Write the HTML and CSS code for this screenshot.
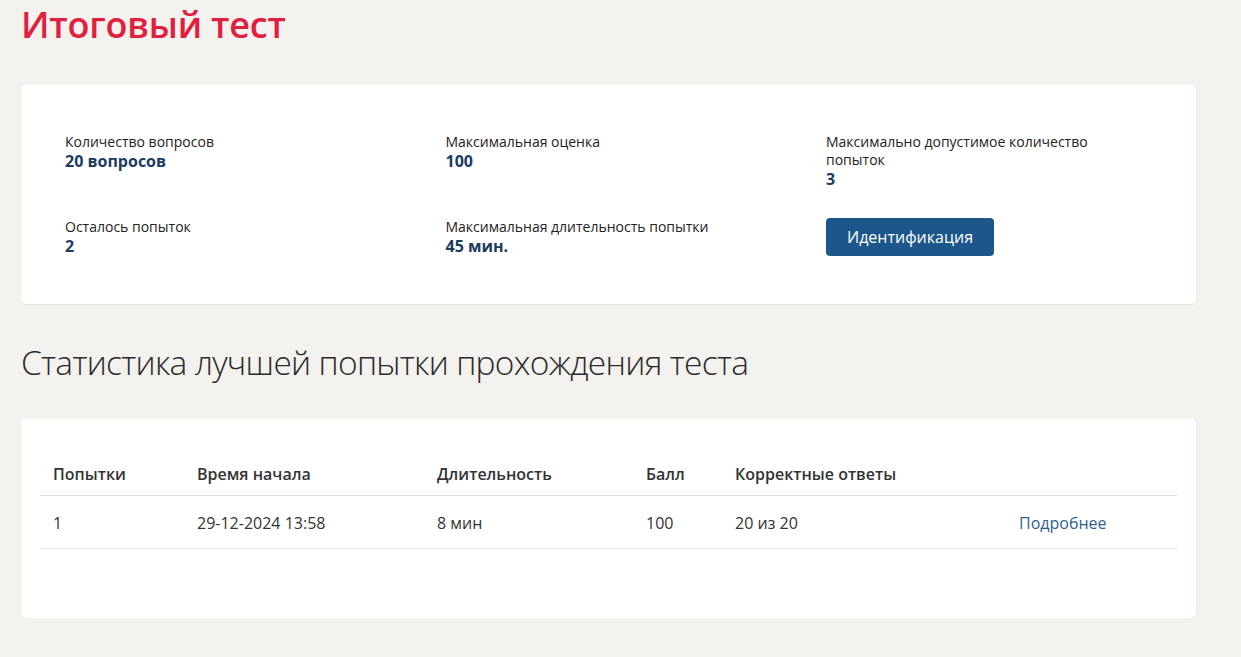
FILE: index.html
```html
<!DOCTYPE html>
<html lang="ru">
<head>
    <meta charset="UTF-8">
    <meta name="viewport" content="width=device-width, initial-scale=1.0">
    <title>Итоговый тест</title>
    <link rel="stylesheet" href="styles.css">
</head>
<body>
    <div class="page">
        <h1 class="page-title">Итоговый тест</h1>

        <div class="card info-card">
            <div class="info-grid">
                <div class="info-item">
                    <div class="info-label">Количество вопросов</div>
                    <div class="info-value">20 вопросов</div>
                </div>
                <div class="info-item">
                    <div class="info-label">Максимальная оценка</div>
                    <div class="info-value">100</div>
                </div>
                <div class="info-item">
                    <div class="info-label">Максимально допустимое количество попыток</div>
                    <div class="info-value">3</div>
                </div>
                <div class="info-item">
                    <div class="info-label">Осталось попыток</div>
                    <div class="info-value">2</div>
                </div>
                <div class="info-item">
                    <div class="info-label">Максимальная длительность попытки</div>
                    <div class="info-value">45 мин.</div>
                </div>
                <div class="info-item">
                    <button class="btn-primary">Идентификация</button>
                </div>
            </div>
        </div>

        <h2 class="section-title">Статистика лучшей попытки прохождения теста</h2>

        <div class="card table-card">
            <table class="stats-table">
                <thead>
                    <tr>
                        <th class="col-try">Попытки</th>
                        <th class="col-start">Время начала</th>
                        <th class="col-dur">Длительность</th>
                        <th class="col-score">Балл</th>
                        <th class="col-correct">Корректные ответы</th>
                        <th class="col-link"></th>
                    </tr>
                </thead>
                <tbody>
                    <tr>
                        <td>1</td>
                        <td>29-12-2024 13:58</td>
                        <td>8 мин</td>
                        <td>100</td>
                        <td>20 из 20</td>
                        <td><a href="#" class="more-link">Подробнее</a></td>
                    </tr>
                </tbody>
            </table>
        </div>
    </div>
</body>
</html>
```

FILE: styles.css
```css
body {
    margin: 0;
    background-color: #f3f2ef;
    font-family: "Open Sans", "Noto Sans", sans-serif;
    color: #222;
}
.page {
    width: 1175px;
    padding: 0 0 0 21px;
}
.page-title {
    margin: 0;
    padding-top: 4px;
    height: 81px;
    font-size: 36px;
    font-weight: 600;
    line-height: 42px;
    color: #e0203e;
    letter-spacing: -0.2px;
}
.card {
    background: #fff;
    border-radius: 5px;
    box-shadow: 0 1px 2px rgba(0,0,0,0.08);
}
.info-card {
    padding: 48px 44px 47px;
}
.info-grid {
    display: grid;
    grid-template-columns: repeat(3, 300px);
    column-gap: 80.5px;
    row-gap: 28px;
}
.info-label {
    font-size: 14px;
    line-height: 18px;
    color: #222;
}
.info-value {
    font-size: 16px;
    line-height: 21px;
    font-weight: 700;
    color: #1b3b60;
}
.btn-primary {
    display: block;
    background-color: #1c568a;
    color: #fff;
    border: none;
    border-radius: 4px;
    height: 38px;
    padding: 0 21px;
    font-family: inherit;
    font-size: 16px;
    cursor: pointer;
}
.section-title {
    margin: 0;
    padding: 38px 0 0;
    height: 77px;
    font-size: 33.5px;
    font-weight: 300;
    line-height: 40px;
    color: #2b2b2b;
    letter-spacing: -0.7px;
}
.table-card {
    padding: 44px 19px 69px;
}
.stats-table {
    width: 100%;
    border-collapse: collapse;
    font-size: 16px;
    color: #333;
}
.stats-table th {
    text-align: left;
    font-weight: 600;
    padding: 0 13px 10px;
    line-height: 22px;
    border-bottom: 1px solid #e0e0e0;
}
.stats-table td {
    padding: 16px 13px 14px;
    line-height: 22px;
    border-bottom: 1px solid #e0e0e0;
}
.col-try { width: 118px; }
.col-start { width: 214px; }
.col-dur { width: 183px; }
.col-score { width: 63px; }
.col-correct { width: 258px; }
.more-link {
    color: #2d5f8f;
    text-decoration: none;
}
```
